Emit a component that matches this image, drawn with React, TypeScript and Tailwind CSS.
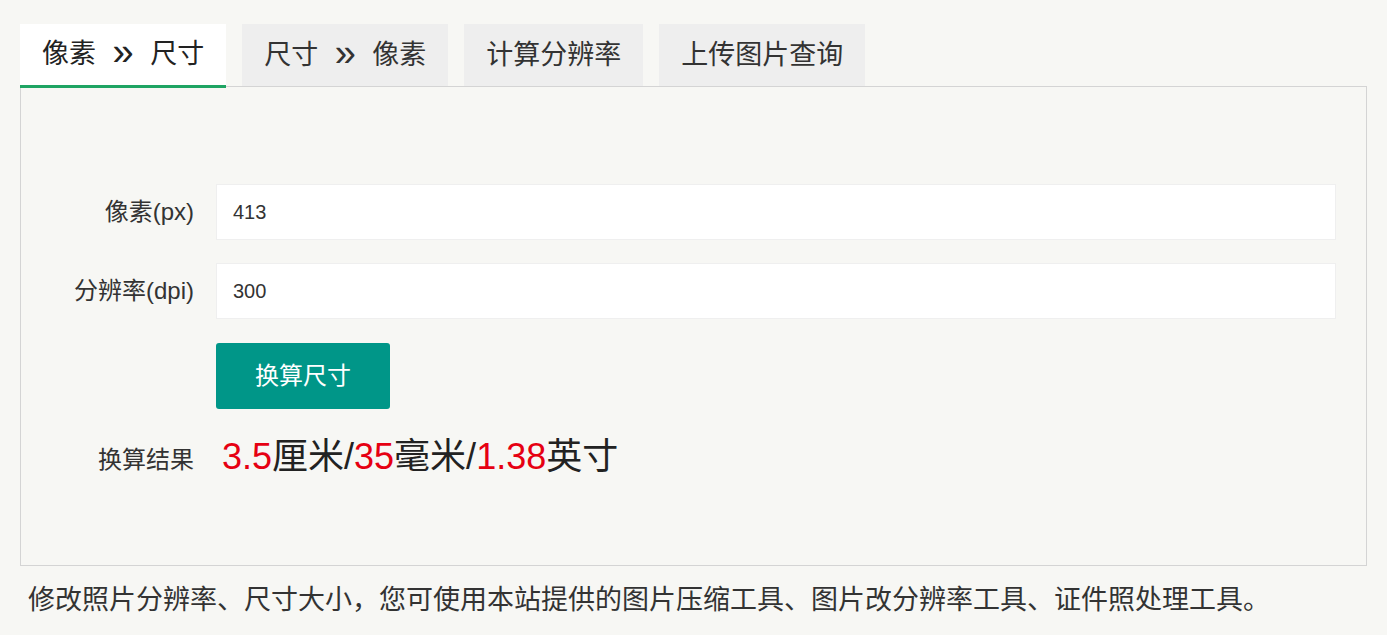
import React from "react";

const font = { fontFamily: '"Liberation Sans", "Noto Sans CJK SC", sans-serif' };

function Arrow() {
  return <span className="mx-[16.5px] inline-block text-[38px] leading-none relative -top-[2px] font-light">»</span>;
}

export default function App() {
  const tabs: [string, string | null][] = [
    ["像素", "尺寸"],
    ["尺寸", "像素"],
    ["计算分辨率", null],
    ["上传图片查询", null],
  ];
  return (
    <div className="min-h-screen w-full bg-[#f7f7f4] px-5 pt-6 text-[#333]" style={font}>
      <div className="relative z-10 -mb-[2px] flex gap-4">
        {tabs.map(([a, b], i) => (
          <div
            key={a}
            className={
              i === 0
                ? "flex h-[64px] items-center whitespace-pre border-b-[3px] border-[#1fa463] bg-white px-[22px] pb-[1px] text-[27px] text-[#222]"
                : "flex h-[62px] items-center whitespace-pre bg-[#eeeeee] px-[22px] text-[27px] text-[#333]"
            }
          >
            {a}
            {b && (
              <>
                <Arrow />
                {b}
              </>
            )}
          </div>
        ))}
      </div>
      <div className="h-[480px] border border-[#d4d4d4] pt-[97px] pr-[30px]">
        <div className="flex items-center">
          <div className="w-[173px] text-right text-[24px] text-[#333]">像素(px)</div>
          <div className="ml-[22px] flex h-[56px] flex-1 items-center border border-[#efefef] bg-white pl-4 text-[20px] text-[#333]">
            413
          </div>
        </div>
        <div className="mt-[23px] flex items-center">
          <div className="w-[173px] text-right text-[24px] text-[#333]">分辨率(dpi)</div>
          <div className="ml-[22px] flex h-[56px] flex-1 items-center border border-[#efefef] bg-white pl-4 text-[20px] text-[#333]">
            300
          </div>
        </div>
        <div className="mt-[24px] flex">
          <div className="ml-[195px] flex h-[66px] w-[174px] items-center justify-center rounded-[3px] bg-[#009688] text-[24px] text-white">
            换算尺寸
          </div>
        </div>
        <div className="mt-[26px] flex items-center">
          <div className="w-[173px] pt-[6px] text-right text-[24px] text-[#333]">换算结果</div>
          <div className="ml-[28px] h-[44px] text-[36px] leading-[44px] text-[#222]">
            <span className="text-[#e60012]">3.5</span>厘米/<span className="text-[#e60012]">35</span>毫米/
            <span className="text-[#e60012]">1.38</span>英寸
          </div>
        </div>
      </div>
      <p className="mt-[14px] pl-2 text-[27px] leading-[40px] text-[#333]">
        修改照片分辨率、尺寸大小，您可使用本站提供的图片压缩工具、图片改分辨率工具、证件照处理工具。
      </p>
    </div>
  );
}
